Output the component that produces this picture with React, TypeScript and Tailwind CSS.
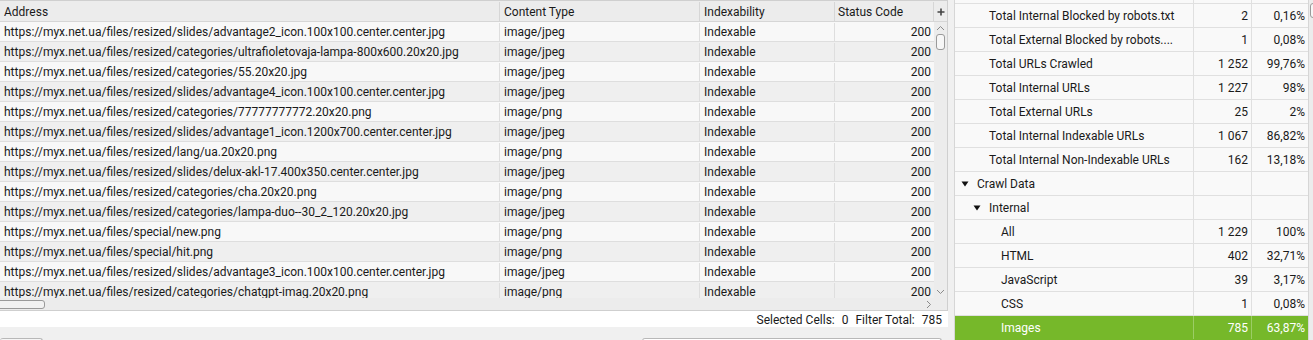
import React from "react";

const rows: [string, string][] = [
  ["https://myx.net.ua/files/resized/slides/advantage2_icon.100x100.center.center.jpg", "image/jpeg"],
  ["https://myx.net.ua/files/resized/categories/ultrafioletovaja-lampa-800x600.20x20.jpg", "image/jpeg"],
  ["https://myx.net.ua/files/resized/categories/55.20x20.jpg", "image/jpeg"],
  ["https://myx.net.ua/files/resized/slides/advantage4_icon.100x100.center.center.jpg", "image/jpeg"],
  ["https://myx.net.ua/files/resized/categories/77777777772.20x20.png", "image/png"],
  ["https://myx.net.ua/files/resized/slides/advantage1_icon.1200x700.center.center.jpg", "image/jpeg"],
  ["https://myx.net.ua/files/resized/lang/ua.20x20.png", "image/png"],
  ["https://myx.net.ua/files/resized/slides/delux-akl-17.400x350.center.center.jpg", "image/jpeg"],
  ["https://myx.net.ua/files/resized/categories/cha.20x20.png", "image/png"],
  ["https://myx.net.ua/files/resized/categories/lampa-duo--30_2_120.20x20.jpg", "image/jpeg"],
  ["https://myx.net.ua/files/special/new.png", "image/png"],
  ["https://myx.net.ua/files/special/hit.png", "image/png"],
  ["https://myx.net.ua/files/resized/slides/advantage3_icon.100x100.center.center.jpg", "image/jpeg"],
  ["https://myx.net.ua/files/resized/categories/chatgpt-imag.20x20.png", "image/png"],
];

type R = { label: string; v?: string; p?: string; lvl: number; tri?: boolean; sel?: boolean };
const right: R[] = [
  { label: "", lvl: 1 },
  { label: "Total Internal Blocked by robots.txt", v: "2", p: "0,16%", lvl: 1 },
  { label: "Total External Blocked by robots....", v: "1", p: "0,08%", lvl: 1 },
  { label: "Total URLs Crawled", v: "1 252", p: "99,76%", lvl: 1 },
  { label: "Total Internal URLs", v: "1 227", p: "98%", lvl: 1 },
  { label: "Total External URLs", v: "25", p: "2%", lvl: 1 },
  { label: "Total Internal Indexable URLs", v: "1 067", p: "86,82%", lvl: 1 },
  { label: "Total Internal Non-Indexable URLs", v: "162", p: "13,18%", lvl: 1 },
  { label: "Crawl Data", lvl: -1, tri: true },
  { label: "Internal", lvl: 0, tri: true },
  { label: "All", v: "1 229", p: "100%", lvl: 2 },
  { label: "HTML", v: "402", p: "32,71%", lvl: 2 },
  { label: "JavaScript", v: "39", p: "3,17%", lvl: 2 },
  { label: "CSS", v: "1", p: "0,08%", lvl: 2 },
  { label: "Images", v: "785", p: "63,87%", lvl: 2, sel: true },
];

const Tri = () => (
  <svg width="8" height="6" viewBox="0 0 8 6" className="mr-[8px] shrink-0">
    <path d="M0.5 0.5 L7.5 0.5 L4 5.5 Z" fill="#111" />
  </svg>
);

export default function App() {
  return (
    <div
      className="w-[1313px] h-[340px] bg-[#f0f0f0] flex overflow-hidden text-[12px] text-[#1a1a1a]"
      style={{ fontFamily: "Roboto, 'Liberation Sans', sans-serif" }}
    >
      {/* Left panel */}
      <div className="w-[948px] shrink-0 flex flex-col">
        <div className="h-[311px] flex flex-col border-t border-r border-b border-[#cfcfcf] bg-[#f0f0f0]">
          {/* header */}
          <div className="h-[21px] pt-[1px] flex bg-[#ececec] border-b border-[#d6d6d6] shrink-0">
            <div className="w-[500px] px-[4px] flex items-center border-r border-[#d6d6d6]">Address</div>
            <div className="w-[200px] px-[4px] flex items-center border-r border-[#d6d6d6]">Content Type</div>
            <div className="w-[135px] px-[4px] flex items-center border-r border-[#d6d6d6]">Indexability</div>
            <div className="w-[99px] px-[3px] flex items-center border-r border-[#d6d6d6]">Status Code</div>
            <div className="flex-1 flex items-center justify-center">
              <svg width="8" height="8" viewBox="0 0 8 8">
                <path d="M4 0.5V7.5M0.5 4H7.5" stroke="#444" strokeWidth="1.6" />
              </svg>
            </div>
          </div>
          {/* body */}
          <div className="flex h-[276px]">
            <div className="w-[934px] overflow-hidden">
              {rows.map((r, i) => (
                <div
                  key={i}
                  className={`h-[20px] pt-[1px] flex border-b border-[#dedede] ${i % 2 === 0 ? "bg-[#f8f8f8]" : "bg-[#efefef]"}`}
                >
                  <div className="w-[500px] px-[4px] flex items-center border-r border-[#dedede] whitespace-nowrap">{r[0]}</div>
                  <div className="w-[200px] px-[4px] flex items-center border-r border-[#dedede]">{r[1]}</div>
                  <div className="w-[135px] px-[4px] flex items-center border-r border-[#dedede]">Indexable</div>
                  <div className="w-[99px] px-[3px] flex items-center justify-end">200</div>
                </div>
              ))}
            </div>
            {/* vertical scrollbar */}
            <div className="flex-1 bg-[#ececec] flex flex-col items-center">
              <svg width="9" height="6" viewBox="0 0 9 6" className="mt-[3px]">
                <path d="M1 5 L4.5 1.5 L8 5" stroke="#8a8a8a" strokeWidth="1" fill="none" />
              </svg>
              <div className="mt-[3px] w-[9px] h-[16px] rounded-[3px] border border-[#9a9a9a] bg-[#f7f7f7]" />
              <div className="flex-1" />
              <svg width="9" height="6" viewBox="0 0 9 6" className="mb-[3px]">
                <path d="M1 1 L4.5 4.5 L8 1" stroke="#8a8a8a" strokeWidth="1" fill="none" />
              </svg>
            </div>
          </div>
          {/* horizontal scrollbar */}
          <div className="h-[13px] flex bg-[#ececec]">
            <div className="w-[934px] flex items-center">
              <div className="ml-[-3px] w-[48px] h-[9px] rounded-[3px] border border-[#9a9a9a] bg-[#f2f2f2]" />
              <div className="flex-1" />
              <svg width="6" height="9" viewBox="0 0 6 9" className="mr-[2px]">
                <path d="M1 1 L4.5 4.5 L1 8" stroke="#8a8a8a" strokeWidth="1" fill="none" />
              </svg>
            </div>
          </div>
        </div>
        {/* status bar */}
        <div className="h-[16px] bg-white flex items-center justify-end pr-[6px] gap-[7px] pt-[1px]">
          <span>Selected Cells:</span>
          <span>0</span>
          <span>Filter Total:</span>
          <span>785</span>
        </div>
        {/* bottom controls */}
        <div className="flex-1 flex items-start pt-[11px]">
          <div className="w-[43px] h-[10px] rounded-t-[3px] border-t border-r border-[#b8b8b8] bg-[#f5f5f5]" />
          <div className="flex-1" />
          <div className="w-[300px] h-[10px] mr-[6px] rounded-t-[3px] border-t border-l border-r border-[#b8b8b8] bg-white" />
        </div>
      </div>

      {/* gap */}
      <div className="w-[6px] shrink-0" />

      {/* Right panel */}
      <div className="flex-1 flex overflow-hidden border-l border-[#d6d6d6]">
        <div className="w-[353px] shrink-0 overflow-hidden">
          <div className="mt-[-20px]">
            {right.map((r, i) => (
              <div
                key={i}
                className={`h-[24px] flex border-b ${r.sel ? "bg-[#76b82a] text-white border-[#76b82a]" : "bg-[#f9f9f9] border-[#e0e0e0]"}`}
              >
                <div
                  className={`w-[239px] flex items-center border-r ${r.sel ? "border-[#9ccd66]" : "border-[#e0e0e0]"} ${
                    r.lvl === -1 ? "pl-[6px]" : r.lvl === 0 ? "pl-[18px]" : r.lvl === 1 ? "pl-[34px]" : "pl-[46px]"
                  } whitespace-nowrap`}
                >
                  {r.tri && <Tri />}
                  {r.label}
                </div>
                <div className={`w-[58px] flex items-center justify-end pr-[3px] border-r ${r.sel ? "border-[#9ccd66]" : "border-[#e0e0e0]"}`}>
                  {r.v}
                </div>
                <div className="flex-1 flex items-center justify-end pr-[3px]">{r.p}</div>
              </div>
            ))}
          </div>
        </div>
        <div className="flex-1 bg-[#ececec] border-l border-[#d6d6d6] flex flex-col">
          <div className="mt-[3px] ml-[1px] w-[9px] h-[15px] rounded-[3px] border border-[#9a9a9a] bg-[#f7f7f7]" />
        </div>
      </div>
    </div>
  );
}
